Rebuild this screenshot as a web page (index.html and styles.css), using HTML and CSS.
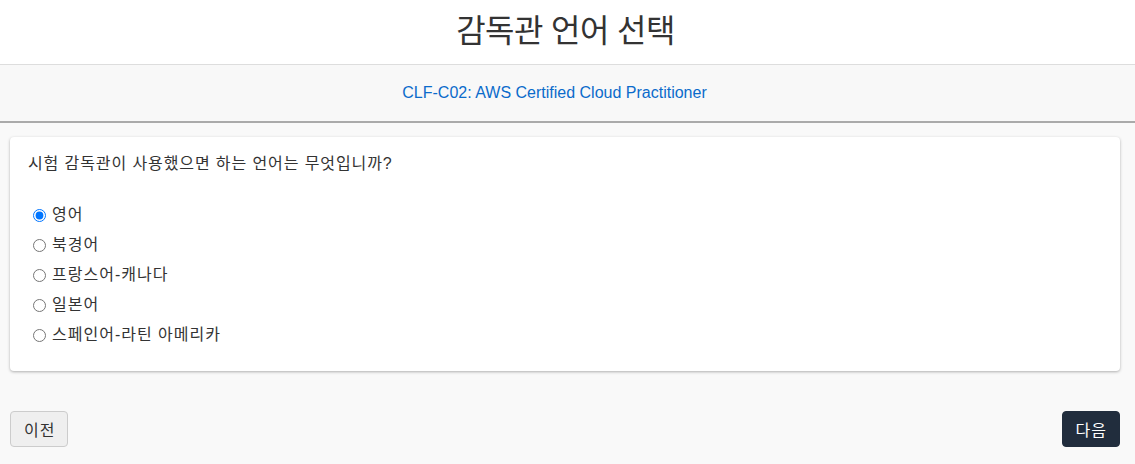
FILE: index.html
```html
<!DOCTYPE html>
<html lang="ko">
<head>
	<meta charset="UTF-8">
	<title>감독관 언어 선택</title>
	<link rel="stylesheet" href="styles.css">
</head>
<body>
	<div id="header">
		<h1>감독관 언어 선택</h1>
	</div>
	<div id="sub-bar">
		<a href="#">CLF-C02: AWS Certified Cloud Practitioner</a>
	</div>
	<div id="main">
		<div class="card">
			<p class="question">시험 감독관이 사용했으면 하는 언어는 무엇입니까?</p>
			<ul class="options">
				<li><label><input type="radio" name="lang" checked> 영어</label></li>
				<li><label><input type="radio" name="lang"> 북경어</label></li>
				<li><label><input type="radio" name="lang"> 프랑스어-캐나다</label></li>
				<li><label><input type="radio" name="lang"> 일본어</label></li>
				<li><label><input type="radio" name="lang"> 스페인어-라틴 아메리카</label></li>
			</ul>
		</div>
		<div class="nav">
			<button class="btn btn-prev">이전</button>
			<button class="btn btn-next">다음</button>
		</div>
	</div>
</body>
</html>
```

FILE: styles.css
```css
*{
	margin: 0;
	padding: 0;
	box-sizing: border-box;
}
body{
	background-color: #f9f9f9;
	font-family: "Liberation Sans", Arial, "Noto Sans CJK KR", sans-serif;
	color: #333;
}
#header{
	height: 65px;
	background-color: #fff;
	border-bottom: 1px solid #ddd;
	display: flex;
	align-items: center;
	justify-content: center;
	padding-right: 4px;
}
#header h1{
	font-size: 32px;
	font-weight: normal;
	color: #333;
	letter-spacing: -0.6px;
	padding-bottom: 8px;
}
#sub-bar{
	height: 58px;
	background-color: #f8f8f8;
	border-bottom: 2px solid #aaa;
	display: flex;
	align-items: center;
	justify-content: center;
	padding-right: 26px;
}
#sub-bar a{
	color: #0b6bcb;
	font-size: 16px;
	text-decoration: none;
}
#main{
	padding: 14px 15px 0 10px;
}
.card{
	background-color: #fff;
	border-radius: 4px;
	box-shadow: 0 1px 3px rgba(0,0,0,.3);
	padding: 13px 18px 21px;
}
.question{
	font-size: 16px;
	color: #333;
	letter-spacing: 0.9px;
	margin-bottom: 26px;
}
.options{
	list-style: none;
}
.options li{
	height: 30px;
	line-height: 30px;
	font-size: 16px;
	letter-spacing: 1px;
}
.options label{
	display: flex;
	align-items: center;
	gap: 6px;
	cursor: pointer;
}
.options input{
	width: 13px;
	height: 13px;
	margin: 0 0 0 5px;
	accent-color: #0075ff;
}
.nav{
	display: flex;
	justify-content: space-between;
	margin-top: 40px;
}
.btn{
	height: 36px;
	padding: 0 12px 0 13px;
	font-size: 16px;
	font-family: inherit;
	letter-spacing: 1px;
	border-radius: 4px;
	cursor: pointer;
}
.btn-prev{
	background-color: #efefef;
	border: 1px solid #ccc;
	color: #333;
}
.btn-next{
	background-color: #212d3d;
	border: 1px solid #212d3d;
	color: #fff;
}
```
